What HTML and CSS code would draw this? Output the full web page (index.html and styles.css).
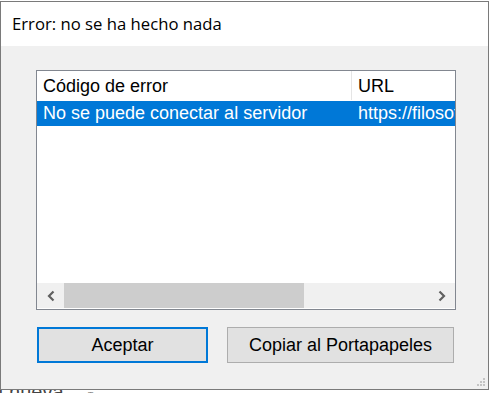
FILE: index.html
```html
<!DOCTYPE html>
<html lang="es">
<head>
<meta charset="utf-8">
<link rel="stylesheet" href="styles.css">
</head>
<body>
<div class="bg-text">ı nueva <span class="bg-mark">¤</span></div>
<div class="dialog">
  <div class="titlebar">Error: no se ha hecho nada</div>
  <div class="body">
    <div class="listbox">
      <div class="list-inner">
        <div class="row header">
          <div class="col c1">Código de error</div>
          <div class="col c2">URL</div>
        </div>
        <div class="row selected">
          <div class="col c1">No se puede conectar al servidor</div>
          <div class="col c2">https://filosofia.net</div>
        </div>
      </div>
      <div class="hscroll">
        <div class="arrow left">
          <svg width="10" height="12" viewBox="0 0 10 12"><path d="M7.5 1.5 L3 6 L7.5 10.5" fill="none" stroke="#606060" stroke-width="2.2"/></svg>
        </div>
        <div class="track"><div class="thumb"></div></div>
        <div class="arrow right">
          <svg width="10" height="12" viewBox="0 0 10 12"><path d="M2.5 1.5 L7 6 L2.5 10.5" fill="none" stroke="#606060" stroke-width="2.2"/></svg>
        </div>
      </div>
    </div>
    <div class="buttons">
      <button class="btn primary">Aceptar</button>
      <button class="btn secondary">Copiar al Portapapeles</button>
    </div>
    <div class="grip">
      <svg width="10" height="10" viewBox="0 0 10 10" fill="#c4c4c4">
        <rect x="7" y="1" width="2" height="2"/>
        <rect x="4" y="4" width="2" height="2"/><rect x="7" y="4" width="2" height="2"/>
        <rect x="1" y="7" width="2" height="2"/><rect x="4" y="7" width="2" height="2"/><rect x="7" y="7" width="2" height="2"/>
      </svg>
    </div>
  </div>
</div>
</body>
</html>
```
FILE: styles.css
```css
html, body {
  margin: 0;
  padding: 0;
}
body {
  width: 490px;
  height: 393px;
  background: #ffffff;
  position: relative;
  overflow: hidden;
  font-family: "Liberation Sans", Arial, sans-serif;
}
.bg-text {
  position: absolute;
  left: -2px;
  top: 381px;
  font-size: 20px;
  color: #444;
  font-family: "Liberation Sans", Arial, sans-serif;
}
.bg-mark {
  font-size: 12px;
  color: #888;
  margin-left: 18px;
}
.dialog {
  position: absolute;
  left: 0;
  top: 1px;
  width: 487px;
  height: 387px;
  border: 1px solid #7a7a7a;
  background: #f0f0f0;
  display: flex;
  flex-direction: column;
}
.titlebar {
  height: 44px;
  background: #ffffff;
  box-sizing: border-box;
  padding: 12px 0 0 11px;
  font-family: "Open Sans", "Noto Sans", sans-serif;
  font-size: 16.7px;
  color: #000;
  line-height: 20px;
}
.body {
  flex: 1;
  position: relative;
  padding: 24px 0 0 35px;
}
.listbox {
  width: 418px;
  height: 238px;
  border: 1px solid #828790;
  background: #ffffff;
  display: flex;
  flex-direction: column;
}
.list-inner {
  flex: 1;
  overflow: hidden;
}
.row {
  display: flex;
  white-space: nowrap;
  font-size: 18px;
}
.header {
  height: 29px;
  align-items: center;
  color: #000;
}
.header .c1 {
  border-right: 1px solid #e5e5e5;
  height: 29px;
  line-height: 30px;
}
.header .c2 {
  line-height: 30px;
}
.selected {
  height: 25px;
  line-height: 25px;
  background: #0078d7;
  color: #ffffff;
  margin-top: 1px;
}
.col {
  box-sizing: border-box;
  overflow: hidden;
}
.c1 {
  width: 315px;
  padding-left: 6px;
  flex: none;
}
.c2 {
  padding-left: 6px;
  flex: none;
}
.hscroll {
  height: 25px;
  display: flex;
  background: #f0f0f0;
  margin-bottom: 1px;
}
.arrow {
  width: 27px;
  display: flex;
  align-items: center;
  justify-content: center;
}
.track {
  flex: 1;
  display: flex;
}
.thumb {
  width: 240px;
  background: #cdcdcd;
}
.buttons {
  display: flex;
  gap: 19px;
  margin-top: 17px;
  padding-left: 1px;
}
.btn {
  font-family: "Liberation Sans", Arial, sans-serif;
  font-size: 18px;
  color: #000;
  background: #e1e1e1;
  height: 36px;
  box-sizing: border-box;
  padding: 0;
  margin: 0;
}
.primary {
  width: 171px;
  border: 2px solid #0078d7;
}
.secondary {
  width: 227px;
  border: 1px solid #adadad;
}
.grip {
  position: absolute;
  right: 2px;
  bottom: 2px;
  width: 10px;
  height: 10px;
  display: flex;
}
```
